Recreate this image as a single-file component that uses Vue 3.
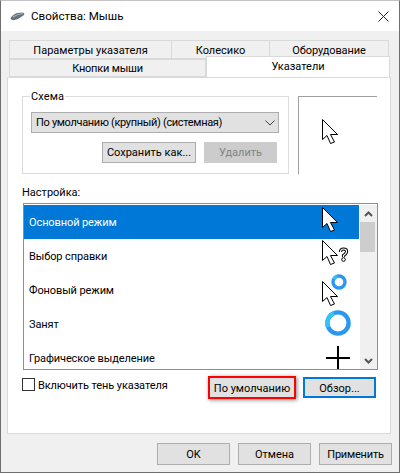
<script setup>
const rows = [
  { label: 'Основной режим', kind: 'arrow', sel: true },
  { label: 'Выбор справки', kind: 'help' },
  { label: 'Фоновый режим', kind: 'bg' },
  { label: 'Занят', kind: 'busy' },
  { label: 'Графическое выделение', kind: 'cross' },
]
const arrowD = 'M0.5 0.5V20.5L5 16.5L8.5 24.5L12.5 23L8.5 15.5H15.5Z'
const qD = 'M18.5 12Q18.5 9 21.5 9Q25 9 24.5 12Q24 14 21.5 15.5V17'
</script>

<template>
  <div class="win">
    <div class="title">
      <svg class="mouse" width="15" height="9" viewBox="0 0 15 9">
        <path d="M0.5 6.5Q2 3 7 1L13 0.5Q15 1.5 14 3L8 7Q2 9.5 0.5 6.5Z" fill="#66727c" />
        <path d="M3 5Q7 2 13 1.5" stroke="#aab4bc" stroke-width="1.2" fill="none" />
      </svg>
      <span class="title-text">Свойства: Мышь</span>
      <svg class="close" width="11" height="11" viewBox="0 0 11 11"><path d="M0.5 0.5L10.5 10.5M10.5 0.5L0.5 10.5" stroke="#222" stroke-width="1" /></svg>
    </div>
    <div class="tabs">
      <div class="tab-row">
        <div class="tab t1">Параметры указателя</div>
        <div class="tab t2">Колесико</div>
        <div class="tab t3">Оборудование</div>
      </div>
      <div class="tab-row second">
        <div class="tab t4">Кнопки мыши</div>
        <div class="tab active">Указатели</div>
      </div>
    </div>
    <div class="panel">
      <div class="top">
        <fieldset class="group">
          <legend>Схема</legend>
          <div class="combo">
            <span>По умолчанию (крупный) (системная)</span>
            <svg width="10" height="6" viewBox="0 0 10 6"><path d="M0.5 0.5L5 5L9.5 0.5" stroke="#444" fill="none" /></svg>
          </div>
          <div class="group-btns">
            <button class="btn save">Сохранить как...</button>
            <button class="btn del">Удалить</button>
          </div>
        </fieldset>
        <div class="preview">
          <svg width="16" height="25" viewBox="0 0 16 25"><path :d="arrowD" fill="#fff" stroke="#000" /></svg>
        </div>
      </div>
      <div class="set-label">Настройка:</div>
      <div class="list">
        <div class="rows">
          <div v-for="r in rows" :key="r.label" class="row" :class="{ sel: r.sel }">
            <span class="row-text">{{ r.label }}</span>
            <div class="cur" :class="r.kind">
              <svg v-if="r.kind === 'arrow'" width="16" height="25" viewBox="0 0 16 25"><path :d="arrowD" fill="#fff" stroke="#000" /></svg>
              <svg v-else-if="r.kind === 'help'" width="27" height="26" viewBox="0 0 27 26">
                <path :d="arrowD" fill="#fff" stroke="#000" />
                <path :d="qD" fill="none" stroke="#000" stroke-width="3.2" />
                <path :d="qD" fill="none" stroke="#fff" stroke-width="1.2" />
                <circle cx="21.5" cy="19.5" r="1.8" fill="#fff" stroke="#000" />
              </svg>
              <svg v-else-if="r.kind === 'bg'" width="27" height="33" viewBox="0 0 27 33">
                <path :d="arrowD" transform="translate(0 7)" fill="#fff" stroke="#000" />
                <circle cx="17" cy="8" r="6" fill="none" stroke="#2b98f0" stroke-width="3.4" />
                <path d="M11.8 5A6 6 0 0 1 15 2.3" fill="none" stroke="#35c3f6" stroke-width="3.4" />
              </svg>
              <svg v-else-if="r.kind === 'busy'" width="26" height="26" viewBox="0 0 26 26">
                <circle cx="13" cy="13" r="10.6" fill="none" stroke="#2b98f0" stroke-width="4.4" />
                <path d="M3.2 17A10.6 10.6 0 0 1 9 3.2" fill="none" stroke="#35c3f6" stroke-width="4.4" />
              </svg>
              <svg v-else width="24" height="24" viewBox="0 0 24 24"><path d="M12 0V24M0 12H24" stroke="#000" stroke-width="2" /></svg>
            </div>
          </div>
        </div>
        <div class="scroll">
          <div class="sb-btn"><svg width="9" height="6" viewBox="0 0 9 6"><path d="M1 5L4.5 1.5L8 5" stroke="#555" stroke-width="2" fill="none" /></svg></div>
          <div class="sb-track"><div class="sb-thumb"></div></div>
          <div class="sb-btn"><svg width="9" height="6" viewBox="0 0 9 6"><path d="M1 1L4.5 4.5L8 1" stroke="#555" stroke-width="2" fill="none" /></svg></div>
        </div>
      </div>
      <div class="actions">
        <label class="check"><span class="box"></span><span class="check-text">Включить тень указателя</span></label>
        <button class="btn def">По умолчанию</button>
        <button class="btn browse">Обзор...</button>
      </div>
    </div>
    <div class="footer">
      <button class="btn foot">OK</button>
      <button class="btn foot">Отмена</button>
      <button class="btn foot apply">Применить</button>
    </div>
  </div>
</template>

<style>
html, body { margin: 0; background: #f0f0f0; }
</style>

<style scoped>
.win {
  width: 400px;
  height: 473px;
  box-sizing: border-box;
  background: #f0f0f0;
  border-left: 1px solid #6e6e6e;
  border-right: 1px solid #6e6e6e;
  border-bottom: 1px solid #6e6e6e;
  border-top: 1px solid #c4c4c4;
  font-family: Roboto, "Liberation Sans", sans-serif;
  font-size: 11px;
  color: #000;
  overflow: hidden;
}
.title {
  height: 30px;
  background: #fff;
  display: flex;
  align-items: center;
  padding-left: 9px;
  padding-right: 10px;
}
.title-text { margin-left: 6px; font-size: 11.6px; flex: 1; }
.tabs { padding: 9px 0 0 8px; height: 37px; }
.tab-row { display: flex; height: 19px; }
.tab-row.second { height: 21px; margin-top: -3px; align-items: flex-end; }
.tab {
  box-sizing: border-box;
  background: #f0f0f0;
  border: 1px solid #d9d9d9;
  display: flex;
  align-items: center;
  justify-content: center;
}
.t1 { width: 163px; height: 19px; padding-top: 1px; }
.t2 { width: 99px; height: 19px; margin-left: -1px; padding-top: 1px; }
.t3 { width: 120px; height: 19px; margin-left: -1px; padding-top: 1px; letter-spacing: -0.1px; }
.t4 { width: 197px; height: 18px; padding-top: 1px; letter-spacing: -0.2px; }
.active {
  width: 184px;
  height: 21px;
  background: #fff;
  border-bottom: 0;
  padding-bottom: 2px;
  position: relative;
  z-index: 1;
}
.panel {
  margin-left: 6px;
  width: 384px;
  height: 357px;
  box-sizing: border-box;
  background: #fff;
  border: 1px solid #d9d9d9;
  padding: 11px 0 0 15px;
}
.top { display: flex; margin-left: -1px; }
.group {
  margin: 0;
  width: 267px;
  height: 85px;
  box-sizing: border-box;
  border: 1px solid #dcdcdc;
  padding: 8px 0 0 8px;
}
legend { padding: 0 1px; margin-left: -1px; line-height: 15px; letter-spacing: 0.1px; }
.combo {
  width: 248px;
  height: 21px;
  box-sizing: border-box;
  background: #e1e1e1;
  border: 1px solid #adadad;
  display: flex;
  align-items: center;
  justify-content: space-between;
  padding: 0 3px 0 4px;
  letter-spacing: -0.32px;
}
.group-btns { display: flex; gap: 8px; margin: 9px 0 0 71px; }
.btn {
  box-sizing: border-box;
  font: inherit;
  color: #000;
  background: #e1e1e1;
  border: 1px solid #adadad;
  padding: 0;
  height: 21px;
}
.save { width: 94px; }
.del { width: 73px; background: #ccc; border-color: #ccc; color: #838383; }
.preview {
  width: 79px;
  height: 78px;
  box-sizing: border-box;
  margin: 7px 0 0 9px;
  border-top: 1px solid #a0a0a0;
  border-left: 1px solid #a0a0a0;
  padding: 22px 0 0 23px;
}
.set-label { margin: 11px 0 0 -1px; height: 18px; line-height: 15px; }
.list {
  width: 355px;
  height: 167px;
  box-sizing: border-box;
  border: 1px solid #8e8e8e;
  padding: 1px 0 0;
  display: flex;
  overflow: hidden;
}
.rows { width: 335px; height: 100%; overflow: hidden; }
.row {
  height: 34px;
  display: flex;
  justify-content: space-between;
  padding-left: 5px;
}
.row.sel { background: #0078d7; color: #fff; }
.row-text { flex: 1; line-height: 34px; margin-top: 1px; letter-spacing: -0.1px; }
.cur { width: 37px; flex: none; overflow: visible; }
.cur svg { display: block; }
.arrow svg { margin-top: 2px; }
.help svg { margin-top: 1px; }
.bg svg { margin-top: 1px; }
.busy svg { margin: 3px 0 0 3px; }
.cross svg { margin: 5px 0 0 4px; }
.scroll {
  width: 17px;
  margin-left: 1px;
  background: #f0f0f0;
  display: flex;
  flex-direction: column;
}
.sb-btn { height: 17px; display: flex; align-items: center; justify-content: center; flex: none; }
.sb-track { flex: 1; }
.sb-thumb { width: 15px; height: 30px; background: #cdcdcd; }
.actions { display: flex; align-items: flex-start; margin: 6px 0 0 -1px; }
.check { display: flex; align-items: flex-start; width: 186px; line-height: 15px; }
.box { width: 13px; height: 13px; margin-top: 2px; box-sizing: border-box; border: 1px solid #333; background: #fff; margin-right: 3px; flex: none; }
.check-text { padding-top: 2px; letter-spacing: -0.1px; }
.def { width: 88px; height: 23px; border: 2px solid #f00; box-shadow: 1px 1px 4px rgba(0, 0, 0, 0.5); padding: 1px 0 0; }
.browse { width: 73px; margin: 1px 0 0 7px; border: 2px solid #0078d7; padding: 1px 0 0; }
.footer { display: flex; gap: 8px; justify-content: flex-end; padding: 9px 7px 0 0; }
.foot { width: 73px; height: 22px; }
.apply { letter-spacing: -0.2px; }
</style>
